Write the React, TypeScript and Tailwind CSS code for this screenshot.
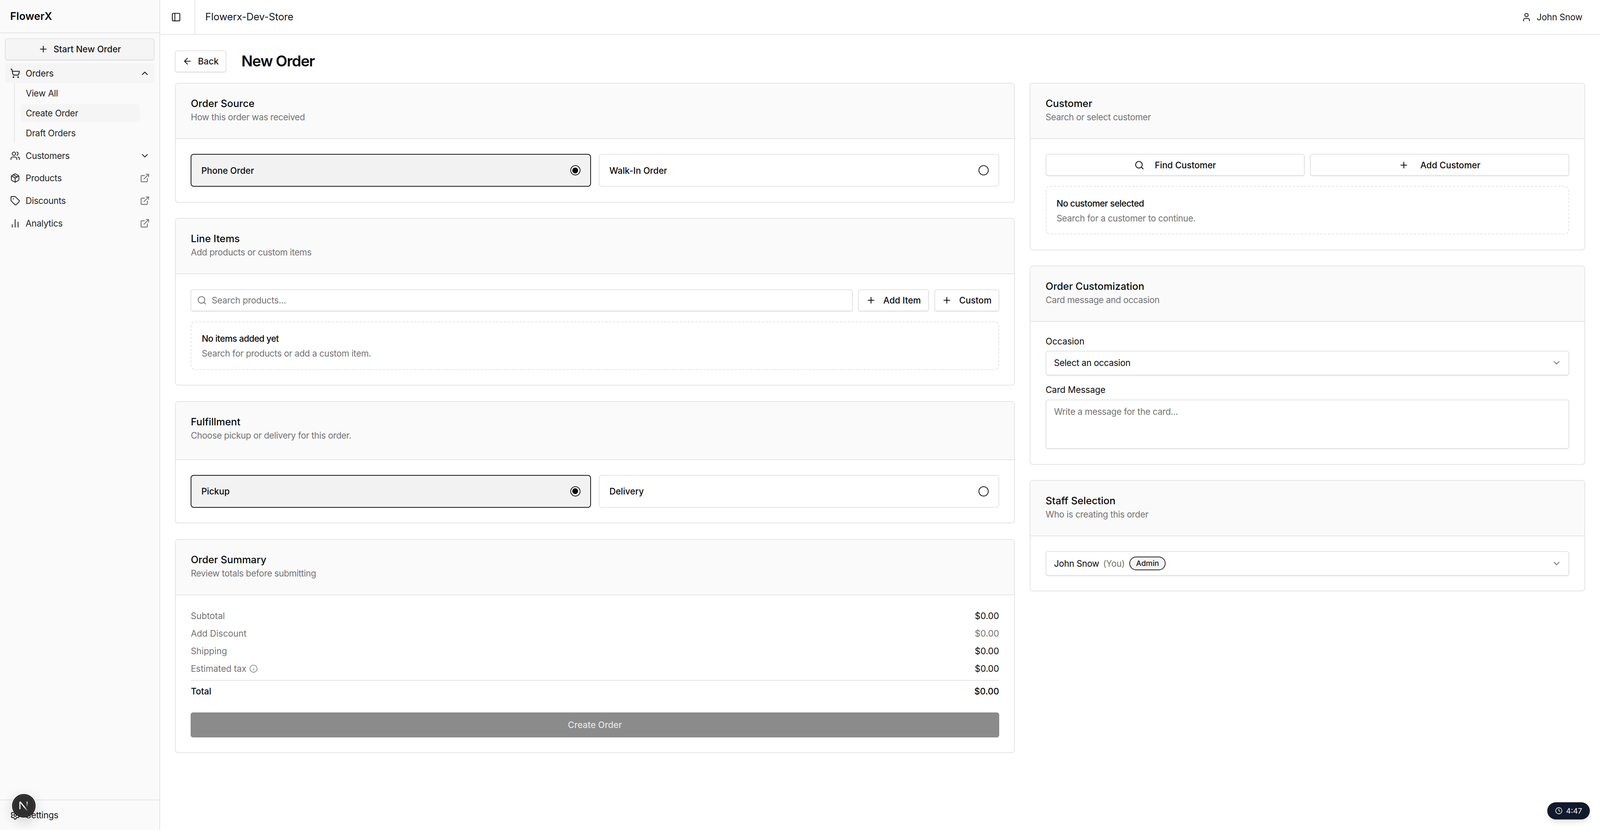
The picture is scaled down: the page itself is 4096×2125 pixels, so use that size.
import React from 'react';
import {
  ArrowLeft,
  ChartNoAxesColumn,
  ChevronDown,
  ChevronUp,
  Clock,
  ExternalLink,
  Info,
  Package,
  PanelLeft,
  Plus,
  Search,
  Settings,
  ShoppingCart,
  Tag,
  User,
  Users,
} from 'lucide-react';

const ICON = 'w-[25.6px] h-[25.6px] shrink-0';
const STROKE = 2;

const SectionCard: React.FC<{
  title: string;
  subtitle: string;
  headerClass?: string;
  bodyClass?: string;
  children: React.ReactNode;
}> = ({ title, subtitle, headerClass = 'h-[142px]', bodyClass = 'px-[38.4px] py-[38.4px]', children }) => (
  <section className="border-2 border-[#e5e5e5] rounded-[8px] bg-white overflow-hidden">
    <div className={`${headerClass} bg-[#fafafa] border-b-2 border-[#e5e5e5] px-[38.4px] pt-[32px]`}>
      <h2 className="text-[25.6px] leading-[38px] font-medium text-[#0a0a0a]">{title}</h2>
      <p className="text-[22.4px] leading-[32px] tracking-[-0.35px] text-[#737373]">{subtitle}</p>
    </div>
    <div className={bodyClass}>{children}</div>
  </section>
);

const RadioCard: React.FC<{ label: string; selected?: boolean }> = ({ label, selected }) => (
  <div
    className={`h-[84px] flex items-center justify-between rounded-[8px] px-[25px] border-2 ${
      selected ? 'bg-[#f2f2f2] border-[#171717]' : 'bg-white border-[#e5e5e5]'
    }`}
  >
    <span className="text-[22.4px] font-[450] text-[#0a0a0a]">{label}</span>
    <span className="w-[26px] h-[26px] rounded-full border-2 border-[#171717] bg-white flex items-center justify-center">
      {selected && <span className="w-[15px] h-[15px] rounded-full bg-[#0a0a0a]" />}
    </span>
  </div>
);

const OutlineButton: React.FC<{ icon: React.ReactNode; label: string; className?: string }> = ({
  icon,
  label,
  className = 'gap-[19px]',
}) => (
  <button
    className={`h-[56px] flex items-center justify-center rounded-[6px] border-2 border-[#e5e5e5] bg-white shadow-sm text-[22.4px] font-[450] text-[#0a0a0a] ${className}`}
  >
    {icon}
    {label}
  </button>
);

const EmptyState: React.FC<{ title: string; text: string }> = ({ title, text }) => (
  <div className="h-[124px] rounded-[12px] border-2 border-dashed border-[#e5e5e5] px-[26px] pt-[24.5px]">
    <p className="text-[22.4px] leading-[36px] tracking-[-0.55px] font-[450] text-[#0a0a0a]">{title}</p>
    <p className="text-[22.4px] leading-[36px] mt-[2px] tracking-[-0.3px] text-[#737373]">{text}</p>
  </div>
);

const SelectBox: React.FC<{ children: React.ReactNode; className?: string }> = ({ children, className = '' }) => (
  <div
    className={`flex items-center justify-between rounded-[6px] border-2 border-[#e5e5e5] bg-white shadow-sm pl-[19.5px] pr-[18px] text-[22.4px] tracking-[-0.25px] text-[#0a0a0a] ${className}`}
  >
    {children}
    <ChevronDown className="w-[25.6px] h-[25.6px] text-[#737373]" strokeWidth={2} />
  </div>
);

const SummaryRow: React.FC<{ label: React.ReactNode; muted?: boolean }> = ({ label, muted }) => (
  <div className="h-[44.8px] flex items-center justify-between text-[22.4px]">
    <span className="flex items-center gap-[7px] text-[#737373]">{label}</span>
    <span className={muted ? 'text-[#737373]' : 'text-[#0a0a0a]'}>$0.00</span>
  </div>
);

const NavRow: React.FC<{ icon: React.ReactNode; label: string; end: React.ReactNode }> = ({ icon, label, end }) => (
  <div className="h-[51.2px] mx-[13px] pl-[13px] pr-[11px] rounded-[8px] flex items-center gap-[14px] text-[22.4px] tracking-[-0.25px] text-[#262626]">
    {icon}
    <span className="flex-1">{label}</span>
    {end}
  </div>
);

const Sidebar: React.FC = () => {
  const ext = <ExternalLink className="w-[25.6px] h-[25.6px] text-[#737373]" strokeWidth={STROKE} />;
  return (
    <aside className="w-[409.6px] shrink-0 h-full flex flex-col bg-[#fafafa] border-r-2 border-[#e5e5e5]">
      <div className="h-[85px] shrink-0 border-b-2 border-[#e5e5e5] pl-[26px] pt-[24px] text-[27px] leading-[36px] font-semibold text-[#0a0a0a]">
        FlowerX
      </div>
      <div className="flex-1 pt-[13px]">
        <button className="h-[56px] mx-[13px] w-[382px] flex items-center justify-center gap-[13px] rounded-[6px] border-2 border-[#e5e5e5] bg-[#f5f5f5] shadow-sm text-[22.4px] font-[450] text-[#171717]">
          <Plus className={ICON} strokeWidth={STROKE} />
          Start New Order
        </button>
        <div className="h-[51px] mt-[8px] mx-[13px] pl-[13px] pr-[11px] rounded-[8px] bg-[#f5f5f5] flex items-center gap-[14px] text-[22.4px] tracking-[-0.1px] text-[#171717]">
          <ShoppingCart className={ICON} strokeWidth={STROKE} />
          <span className="flex-1">Orders</span>
          <ChevronUp className={ICON} strokeWidth={STROKE} />
        </div>
        <div className="ml-[36px] w-[322px] h-[153px] border-l-2 border-[#e5e5e5] pl-[15px] flex flex-col pt-[3px] gap-[6.4px] text-[22.4px] tracking-[-0.25px] text-[#262626]">
          <div className="h-[44.8px] flex items-center pl-[13px] rounded-[8px]">View All</div>
          <div className="h-[44.8px] flex items-center pl-[13px] rounded-[8px] bg-[#f5f5f5]">Create Order</div>
          <div className="h-[44.8px] flex items-center pl-[13px] rounded-[8px]">Draft Orders</div>
        </div>
        <div className="mt-[7px] flex flex-col gap-[6.4px]">
          <NavRow
            icon={<Users className={ICON} strokeWidth={STROKE} />}
            label="Customers"
            end={<ChevronDown className={ICON} strokeWidth={STROKE} />}
          />
          <NavRow icon={<Package className={ICON} strokeWidth={STROKE} />} label="Products" end={ext} />
          <NavRow icon={<Tag className={ICON} strokeWidth={STROKE} />} label="Discounts" end={ext} />
          <NavRow icon={<ChartNoAxesColumn className={ICON} strokeWidth={STROKE} />} label="Analytics" end={ext} />
        </div>
      </div>
      <div className="h-[78px] shrink-0 border-t-2 border-[#e5e5e5] pl-[26px] flex items-center gap-[14px] text-[22.4px] tracking-[-0.25px] text-[#171717]">
        <Settings className={ICON} strokeWidth={STROKE} />
        Settings
      </div>
    </aside>
  );
};

export default function App() {
  return (
    <div className="relative w-[4096px] h-[2125px] overflow-hidden flex bg-white font-['Inter',sans-serif]">
      <Sidebar />
      <div className="flex-1 min-w-0 flex flex-col">
        <header className="h-[89px] shrink-0 flex items-center border-b-2 border-[#e5e5e5]">
          <div className="w-[90px] h-full flex items-center justify-center pr-[5px] border-r-2 border-[#e5e5e5] text-[#171717]">
            <PanelLeft className={ICON} strokeWidth={STROKE} />
          </div>
          <span className="ml-[26px] flex-1 text-[25.6px] tracking-[-0.2px] text-[#171717]">Flowerx-Dev-Store</span>
          <div className="flex items-center gap-[13px] pr-[45px] text-[22.4px] tracking-[-0.1px] text-[#171717]">
            <User className={ICON} strokeWidth={STROKE} />
            John Snow
          </div>
        </header>

        <main className="flex-1 px-[38.4px] pt-[40px]">
          <div className="flex items-center h-[56px] gap-[39px]">
            <button className="h-[56px] w-[131px] flex items-center justify-center gap-[14px] rounded-[6px] border-2 border-[#e5e5e5] bg-white shadow-sm text-[22.4px] font-[450] text-[#171717]">
              <ArrowLeft className={ICON} strokeWidth={STROKE} />
              Back
            </button>
            <h1 className="text-[38.4px] tracking-[-1.3px] font-semibold text-[#0a0a0a]">New Order</h1>
          </div>

          <div className="grid grid-cols-[2150px_1fr] gap-[38.4px] mt-[27px] items-start">
            <div className="flex flex-col gap-[39.5px]">
              <SectionCard title="Order Source" subtitle="How this order was received">
                <div className="grid grid-cols-2 gap-[20px]">
                  <RadioCard label="Phone Order" selected />
                  <RadioCard label="Walk-In Order" />
                </div>
              </SectionCard>

              <SectionCard title="Line Items" subtitle="Add products or custom items">
                <div className="flex gap-[14px]">
                  <div className="flex-1 h-[56px] flex items-center gap-[12px] rounded-[6px] border-2 border-[#e5e5e5] bg-white shadow-sm pl-[14px] text-[22.4px] tracking-[-0.2px] text-[#737373]">
                    <Search className={ICON} strokeWidth={STROKE} />
                    Search products...
                  </div>
                  <OutlineButton
                    className="w-[181px] gap-[19px]"
                    icon={<Plus className={ICON} strokeWidth={STROKE} />}
                    label="Add Item"
                  />
                  <OutlineButton
                    className="w-[166px] gap-[19px]"
                    icon={<Plus className={ICON} strokeWidth={STROKE} />}
                    label="Custom"
                  />
                </div>
                <div className="mt-[26px]">
                  <EmptyState title="No items added yet" text="Search for products or add a custom item." />
                </div>
              </SectionCard>

              <SectionCard title="Fulfillment" subtitle="Choose pickup or delivery for this order." headerClass="h-[149px]">
                <div className="grid grid-cols-2 gap-[20px]">
                  <RadioCard label="Pickup" selected />
                  <RadioCard label="Delivery" />
                </div>
              </SectionCard>

              <SectionCard title="Order Summary" subtitle="Review totals before submitting" bodyClass="px-[38.4px] pt-[31px] pb-[38.4px]">
                <SummaryRow label="Subtotal" />
                <SummaryRow label="Add Discount" muted />
                <SummaryRow label="Shipping" />
                <SummaryRow
                  label={
                    <>
                      Estimated tax
                      <Info className="w-[22px] h-[22px]" strokeWidth={1.7} />
                    </>
                  }
                />
                <div className="border-t-2 border-[#e5e5e5] mt-[7px] h-[55px] flex items-center justify-between text-[22.4px] text-[#0a0a0a]">
                  <span className="font-[450]">Total</span>
                  <span className="font-[450]">$0.00</span>
                </div>
                <button className="mt-[28px] w-full h-[64px] rounded-[6px] bg-[#8b8b8b] text-[22.4px] font-[450] text-[#e4e4e4]">
                  Create Order
                </button>
              </SectionCard>
            </div>

            <div className="flex flex-col gap-[39px]">
              <SectionCard title="Customer" subtitle="Search or select customer">
                <div className="grid grid-cols-2 gap-[14px]">
                  <OutlineButton
                    className="gap-[27px]"
                    icon={<Search className={ICON} strokeWidth={STROKE} />}
                    label="Find Customer"
                  />
                  <OutlineButton
                    className="gap-[29px]"
                    icon={<Plus className={ICON} strokeWidth={STROKE} />}
                    label="Add Customer"
                  />
                </div>
                <div className="mt-[26px]">
                  <EmptyState title="No customer selected" text="Search for a customer to continue." />
                </div>
              </SectionCard>

              <SectionCard title="Order Customization" subtitle="Card message and occasion" bodyClass="px-[38.4px] pt-[34px] pb-[38.4px]">
                <label className="block text-[22.4px] leading-[32px] text-[#0a0a0a]">Occasion</label>
                <SelectBox className="h-[63px] mt-[8px]">Select an occasion</SelectBox>
                <label className="block mt-[21.6px] text-[22.4px] leading-[32px] text-[#0a0a0a]">Card Message</label>
                <div className="mt-[8.4px] h-[126.4px] rounded-[6px] border-2 border-[#e5e5e5] bg-white shadow-sm px-[19.5px] py-[12px] text-[22.4px] tracking-[-0.25px] text-[#737373]">
                  Write a message for the card...
                </div>
              </SectionCard>

              <SectionCard title="Staff Selection" subtitle="Who is creating this order">
                <SelectBox className="h-[63px]">
                  <span className="flex items-center">
                    John Snow
                    <span className="ml-[10px] text-[#737373]">(You)</span>
                    <span className="ml-[12px] h-[35px] w-[93px] flex items-center justify-center rounded-full border-2 border-[#262626] bg-[#f5f5f5] text-[19.2px] tracking-normal font-[450] text-[#171717]">
                      Admin
                    </span>
                  </span>
                </SelectBox>
              </SectionCard>
            </div>
          </div>
        </main>
      </div>

      {/* dev tools badge */}
      <div className="absolute left-[31px] top-[2033px] w-[60px] h-[60px] rounded-full bg-[#2e2e2e] border-2 border-[#111] shadow-[0_0_0_1.5px_#4d4d4d_inset,0_10px_32px_rgba(0,0,0,0.18)] flex items-center justify-center">
        <svg viewBox="0 0 24 24" className="w-[30px] h-[30px]" fill="none">
          <defs>
            <linearGradient id="nfade" x1="0" y1="0" x2="1" y2="1">
              <stop offset="0.55" stopColor="#fff" />
              <stop offset="1" stopColor="#fff" stopOpacity="0" />
            </linearGradient>
            <linearGradient id="nbar" x1="0" y1="0" x2="0" y2="1">
              <stop offset="0" stopColor="#fff" />
              <stop offset="0.75" stopColor="#fff" stopOpacity="0" />
            </linearGradient>
          </defs>
          <path d="M4 4v15" stroke="#fff" strokeWidth="2.2" />
          <path d="M4 3.5 20 23" stroke="url(#nfade)" strokeWidth="2.4" />
          <rect x="17.6" y="3.5" width="2.2" height="15" fill="url(#nbar)" />
        </svg>
      </div>

      {/* session timer */}
      <div className="absolute right-[26px] bottom-[27px] w-[109px] h-[44px] rounded-full bg-[#111a2b] shadow-lg flex items-center justify-center gap-[9px] text-[19.2px] text-[#f3f4f6]">
        <Clock className="w-[19.2px] h-[19.2px]" strokeWidth={2} />
        4:47
      </div>
    </div>
  );
}
